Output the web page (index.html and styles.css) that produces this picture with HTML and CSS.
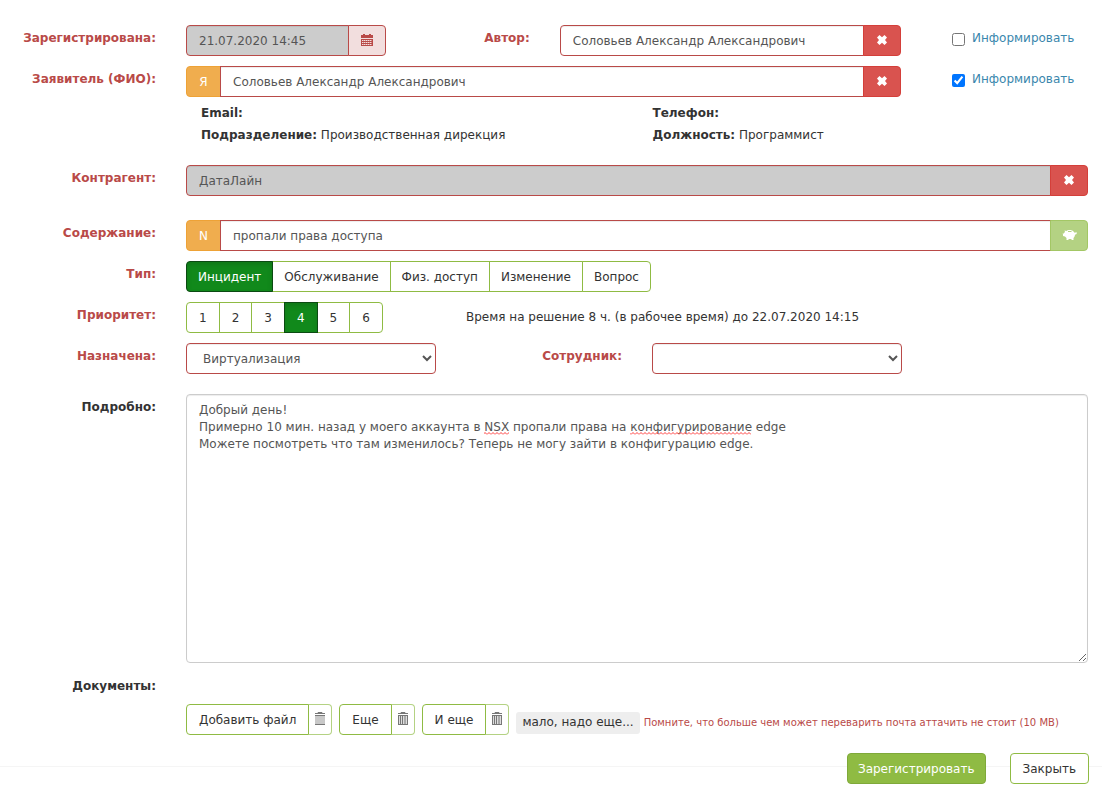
FILE: index.html
```html
<!DOCTYPE html>
<html lang="ru">

<head>
    <meta charset="UTF-8">
    <meta name="viewport" content="width=device-width, initial-scale=1.0">
    <title>Регистрация заявки</title>
    <link rel="stylesheet" href="styles.css">
</head>

<body>
    <!-- Shared icons -->
    <svg class="sprite" aria-hidden="true">
        <symbol id="icon-remove" viewBox="0 0 12 12">
            <path d="M3.500 1 L6 3.200 L8.500 1 L11 3.500 L9 6 L11 8.500 L8.500 11 L6 8.800 L3.500 11 L1 8.500 L3 6 L1 3.500 Z" fill="currentColor"/>
        </symbol>
        <symbol id="icon-calendar" viewBox="0 0 12 12">
            <path d="M0 1 H2 V0 H4 V1 H8 V0 H10 V1 H12 V4 H0 Z M0 5 H12 V12 H0 Z" fill="currentColor"/>
            <path d="M1 6.5 H11 M1 8.5 H11 M1 10.5 H11" stroke="#f2dede" stroke-dasharray="1.500 .5"/>
        </symbol>
        <symbol id="icon-pig" viewBox="0 0 15 12">
            <path d="M0 4 L1 5 L2 4 L3 3 L2.500 1.500 L4.500 2 C6 .5 10 .5 11.500 2.500 L13 4 L14 3 L15 4 L14 5.500 L13 5.500 C13 7.500 12 8.500 11.500 9 V11 H9.500 V10 H6.500 V11 H4.500 V9 L3 7.500 L1 7 V5.500 Z" fill="currentColor"/>
            <path d="M6 2.500 H9.500" stroke="#b4d283"/>
        </symbol>
        <symbol id="icon-trash" viewBox="0 0 12 14">
            <path d="M4 2 V1.500 H8 V2 M1 2.500 H11" fill="none" stroke="currentColor"/>
            <path d="M2 5 H10 V13 H2 Z" fill="#ddd"/>
            <path d="M1 4.500 H11 M1.500 4.500 V13 M10.500 4.500 V13 M3.500 5 V13 M5.500 5 V13 M8 5 V13 M1 13.500 H11" fill="none" stroke="currentColor"/>
        </symbol>
        <symbol id="icon-trash-full" viewBox="0 0 12 14">
            <path d="M4 2 V1.500 H8 V2 M1 2.500 H11" fill="none" stroke="currentColor"/>
            <path d="M1 5 H11 V13 H1 Z" fill="#c8c8c8"/>
            <path d="M1 4.500 H11 M1 13.500 H11" stroke="currentColor"/>
        </symbol>
        <pattern id="squiggle" width="4" height="3" patternUnits="userSpaceOnUse">
            <path d="M0 2.500 L2 .5 L4 2.500" fill="none" stroke="#ff3b3b"/>
        </pattern>
    </svg>

    <form class="ticket-form">
        <div class="form-row">
            <label class="required" for="registered">Зарегистрирована:</label>
            <div class="author-row">
                <div class="input-group">
                    <input class="form-control" id="registered" type="text" value="21.07.2020 14:45" readonly>
                    <button class="btn btn-calendar" type="button" aria-label="Календарь"><svg width="12" height="12"><use href="#icon-calendar"/></svg></button>
                </div>
                <label class="required" for="author">Автор:</label>
                <div class="input-group">
                    <input class="form-control" id="author" type="text" value="Соловьев Александр Александрович">
                    <button class="btn btn-danger" type="button" aria-label="Очистить"><svg width="12" height="12"><use href="#icon-remove"/></svg></button>
                </div>
                <label class="inform"><input type="checkbox"> Информировать</label>
            </div>
        </div>

        <div class="form-row">
            <label class="required" for="applicant">Заявитель (ФИО):</label>
            <div class="applicant-row">
                <div class="input-group">
                    <button class="btn btn-warning" type="button">Я</button>
                    <input class="form-control" id="applicant" type="text" value="Соловьев Александр Александрович">
                    <button class="btn btn-danger" type="button" aria-label="Очистить"><svg width="12" height="12"><use href="#icon-remove"/></svg></button>
                </div>
                <label class="inform"><input type="checkbox" checked> Информировать</label>
            </div>
        </div>

        <div class="form-row person">
            <div class="person-info">
                <div><b>Email:</b></div>
                <div><b>Телефон:</b></div>
                <div><b>Подразделение:</b> Производственная дирекция</div>
                <div><b>Должность:</b> Программист</div>
            </div>
        </div>

        <div class="form-row contractor">
            <label class="required" for="contractor">Контрагент:</label>
            <div class="input-group">
                <input class="form-control" id="contractor" type="text" value="ДатаЛайн" readonly>
                <button class="btn btn-danger" type="button" aria-label="Очистить"><svg width="12" height="12"><use href="#icon-remove"/></svg></button>
            </div>
        </div>

        <div class="form-row">
            <label class="required" for="subject">Содержание:</label>
            <div class="input-group">
                <button class="btn btn-warning" type="button">N</button>
                <input class="form-control" id="subject" type="text" value="пропали права доступа">
                <button class="btn btn-pig" type="button" aria-label="Шаблоны"><svg width="15" height="12"><use href="#icon-pig"/></svg></button>
            </div>
        </div>

        <div class="form-row">
            <span class="label required" id="type-label">Тип:</span>
            <div class="btn-group type-group" role="group" aria-labelledby="type-label">
                <button class="btn active" type="button">Инцидент</button>
                <button class="btn" type="button">Обслуживание</button>
                <button class="btn" type="button">Физ. доступ</button>
                <button class="btn" type="button">Изменение</button>
                <button class="btn" type="button">Вопрос</button>
            </div>
        </div>

        <div class="form-row">
            <span class="label required" id="priority-label">Приоритет:</span>
            <div class="priority-row">
                <div class="btn-group" role="group" aria-labelledby="priority-label">
                    <button class="btn" type="button">1</button>
                    <button class="btn" type="button">2</button>
                    <button class="btn" type="button">3</button>
                    <button class="btn active" type="button">4</button>
                    <button class="btn" type="button">5</button>
                    <button class="btn" type="button">6</button>
                </div>
                <span>Время на решение 8 ч. (в рабочее время) до 22.07.2020 14:15</span>
            </div>
        </div>

        <div class="form-row assign">
            <label class="required" for="group">Назначена:</label>
            <div class="assign-row">
                <select class="form-control" id="group">
                    <option>Виртуализация</option>
                </select>
                <label class="required" for="employee">Сотрудник:</label>
                <select class="form-control" id="employee">
                    <option></option>
                </select>
            </div>
        </div>

        <div class="form-row">
            <label for="details">Подробно:</label>
            <div class="details-box">
                <textarea class="form-control" id="details" rows="15" spellcheck="false">Добрый день!
Примерно 10 мин. назад у моего аккаунта в NSX пропали права на конфигурирование edge
Можете посмотреть что там изменилось? Теперь не могу зайти в конфигурацию edge.</textarea>
                <!-- Spelling marks over the text -->
                <svg class="spelling" width="600" height="3" aria-hidden="true">
                    <rect x="285" width="25" height="3" fill="url(#squiggle)"/>
                    <rect x="431" width="121" height="3" fill="url(#squiggle)"/>
                </svg>
            </div>
        </div>

        <div class="form-row">
            <span class="label">Документы:</span>
            <div class="files">
                <div class="btn-group">
                    <button class="btn" type="button">Добавить файл</button>
                    <button class="btn btn-trash" type="button" aria-label="Удалить"><svg width="12" height="14"><use href="#icon-trash-full"/></svg></button>
                </div>
                <div class="btn-group">
                    <button class="btn" type="button">Еще</button>
                    <button class="btn btn-trash" type="button" aria-label="Удалить"><svg width="12" height="14"><use href="#icon-trash"/></svg></button>
                </div>
                <div class="btn-group">
                    <button class="btn" type="button">И еще</button>
                    <button class="btn btn-trash" type="button" aria-label="Удалить"><svg width="12" height="14"><use href="#icon-trash"/></svg></button>
                </div>
                <div class="files-note">
                    <button class="more" type="button">мало, надо еще...</button>
                    <small>Помните, что больше чем может переварить почта аттачить не стоит (10 MB)</small>
                </div>
            </div>
        </div>

        <footer>
            <button class="btn btn-submit" type="submit">Зарегистрировать</button>
            <button class="btn" type="button">Закрыть</button>
        </footer>
    </form>
</body>

</html>
```
FILE: styles.css
```css
* {
    box-sizing: border-box;
}

body {
    margin: 0;
    font-family: Verdana, "DejaVu Sans", sans-serif;
    font-size: 12px;
    line-height: 17px;
    color: #333;
    background-color: #fff;
}

button,
input,
select,
textarea {
    margin: 0;
    font: inherit;
}

.sprite {
    position: absolute;
    width: 0;
    height: 0;
}

.ticket-form {
    padding-top: 25px;
}

.form-row {
    display: grid;
    grid-template-columns: 141px 1fr;
    column-gap: 30px;
    margin-bottom: 10px;
    padding: 0 14px 0 15px;
}

label,
.label {
    padding-top: 5px;
    font-weight: bold;
    text-align: right;
    white-space: nowrap;
}

.required {
    color: #b94a48;
}

/* Fields */
.form-control {
    width: 100%;
    min-width: 0;
    padding: 7px 12px 5px;
    border: 1px solid #b94a48;
    border-radius: 4px;
    color: #555;
    background-color: #fff;
    box-shadow: inset 0 1px 1px rgba(0, 0, 0, 0.075);
}

.form-control[readonly] {
    background-color: #ccc;
}

select.form-control {
    height: 31px;
    padding: 6px 0 6px 12px;
}

.input-group,
.btn-group {
    display: flex;
}

.input-group {
    height: 31px;
}

.input-group .form-control {
    flex: 1;
}

.input-group > :not(:last-child) {
    border-top-right-radius: 0;
    border-bottom-right-radius: 0;
}

.input-group > :not(:first-child) {
    margin-left: -1px;
    border-top-left-radius: 0;
    border-bottom-left-radius: 0;
}

/* Buttons */
.btn {
    display: inline-flex;
    align-items: center;
    justify-content: center;
    height: 31px;
    padding: 1px 12px 0;
    border: 1px solid #8fbb43;
    border-radius: 4px;
    color: #333;
    background-color: #fff;
    white-space: nowrap;
    cursor: pointer;
}

.btn.active {
    z-index: 1;
    color: #fff;
    background-color: #11891b;
    border-color: #0b4a12;
    box-shadow: inset 0 3px 5px rgba(0, 0, 0, 0.125);
}

.btn-group .btn:not(:last-child) {
    border-top-right-radius: 0;
    border-bottom-right-radius: 0;
}

.btn-group .btn:not(:first-child) {
    margin-left: -1px;
    border-top-left-radius: 0;
    border-bottom-left-radius: 0;
}

.type-group .btn {
    padding: 1px 11px 0;
}

.btn-danger,
.btn-calendar,
.btn-pig {
    width: 38px;
    padding: 0 0 1px;
    color: #fff;
    background-color: #d9534f;
    border-color: #d43f3a;
}

.btn-calendar {
    color: #b94a48;
    background-color: #f2dede;
    border-color: #b94a48;
}

.btn-pig {
    background-color: #b4d283;
    border-color: #a3c765;
}

.btn-warning {
    width: 35px;
    padding: 1px 0 0;
    color: #fff;
    background-color: #f0ad4e;
    border-color: #eea236;
}

.btn-trash {
    width: 24px;
    padding: 0 0 3px;
    color: #777;
    border-color: #b4d283;
    border-left-color: #8fbb43;
}

.btn-submit {
    padding: 1px 10px 0;
    color: #fff;
    background-color: #8fbb43;
    border-color: #7fa93a;
}

/* Rows */
.author-row {
    display: grid;
    grid-template-columns: 200px 1fr 3fr 157px;
    column-gap: 30px;
}

.applicant-row {
    display: grid;
    grid-template-columns: 1fr 157px;
    column-gap: 30px;
}

.inform {
    display: flex;
    gap: 7px;
    padding-left: 21px;
    font-weight: normal;
    color: #3a87ad;
}

.inform input {
    width: 13px;
    height: 13px;
    margin-top: 3px;
}

.person {
    margin: -5px 0 19px;
}

.person-info {
    grid-column: 2;
    display: grid;
    grid-template-columns: 1fr 1fr;
    padding-left: 15px;
    line-height: 22px;
}

.person-info div:nth-child(even) {
    padding-left: 8px;
}

.contractor {
    margin-bottom: 24px;
}

.priority-row,
.assign-row {
    display: grid;
    grid-template-columns: 250px 1fr;
    align-items: center;
    column-gap: 30px;
}

.assign-row {
    grid-template-columns: 250px 1fr 250px 1fr;
    align-items: start;
}

.assign {
    margin-bottom: 20px;
}

/* Description */
.details-box {
    position: relative;
}

.details-box textarea {
    display: block;
    height: 269px;
    border-color: #ccc;
    resize: vertical;
}

.spelling {
    position: absolute;
    top: 38px;
    left: 13px;
    pointer-events: none;
}

/* Documents */
.files {
    display: flex;
    gap: 7px;
    padding-top: 31px;
}

.files-note {
    display: flex;
    align-items: center;
    gap: 4px;
    padding-top: 6px;
    white-space: nowrap;
}

.files-note small {
    font-size: 10px;
    color: #b94a48;
}

.more {
    height: 22px;
    padding: 0 6px;
    border: 0;
    border-radius: 3px;
    color: #333;
    background-color: #eee;
}

footer {
    position: relative;
    display: flex;
    justify-content: flex-end;
    gap: 24px;
    margin-top: 18px;
    padding: 0 13px 12px 0;
}

footer::before {
    content: "";
    position: absolute;
    top: 13px;
    left: 0;
    width: 100%;
    border-top: 1px solid #f5f5f5;
}

footer .btn {
    position: relative;
}
```
